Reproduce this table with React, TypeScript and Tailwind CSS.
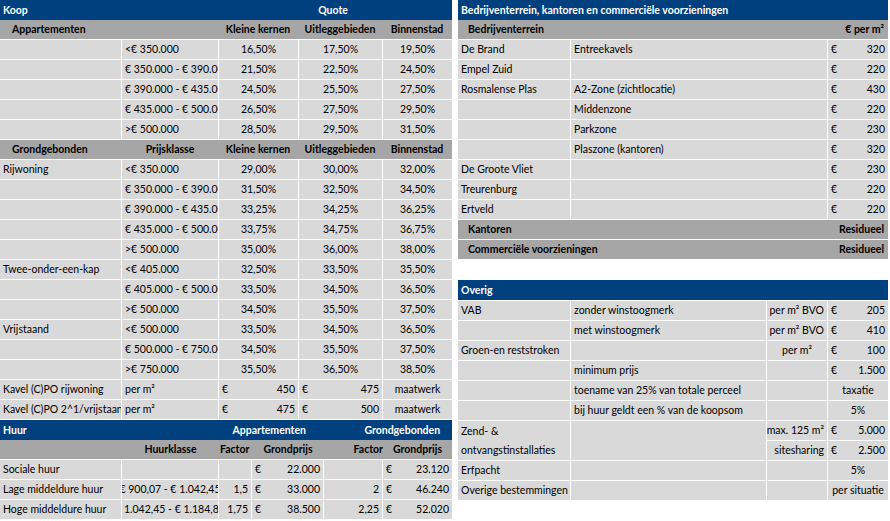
import React from 'react';
import clsx from 'clsx';

// Excel-like tables: grey cells split by 1px white lines
const cell = 'flex items-center overflow-hidden whitespace-nowrap bg-[#d9d9d9] px-[3px]';
const head = 'flex items-center overflow-hidden whitespace-nowrap bg-[#a6a6a6] font-bold';
const title = 'flex h-5 items-center bg-[#00407f] px-[3px] font-bold text-white';

function Money({ v }: { v: string }) {
  return (
    <div className={clsx(cell, 'justify-between')}>
      <span>€</span>
      <span>{v}</span>
    </div>
  );
}

const apartments = [
  ['<€ 350.000', '16,50%', '17,50%', '19,50%'],
  ['€ 350.000 - € 390.000', '21,50%', '22,50%', '24,50%'],
  ['€ 390.000 - € 435.000', '24,50%', '25,50%', '27,50%'],
  ['€ 435.000 - € 500.000', '26,50%', '27,50%', '29,50%'],
  ['>€ 500.000', '28,50%', '29,50%', '31,50%'],
];

const grond = [
  ['Rijwoning', '<€ 350.000', '29,00%', '30,00%', '32,00%'],
  ['', '€ 350.000 - € 390.000', '31,50%', '32,50%', '34,50%'],
  ['', '€ 390.000 - € 435.000', '33,25%', '34,25%', '36,25%'],
  ['', '€ 435.000 - € 500.000', '33,75%', '34,75%', '36,75%'],
  ['', '>€ 500.000', '35,00%', '36,00%', '38,00%'],
  ['Twee-onder-een-kap', '<€ 405.000', '32,50%', '33,50%', '35,50%'],
  ['', '€ 405.000 - € 500.000', '33,50%', '34,50%', '36,50%'],
  ['', '>€ 500.000', '34,50%', '35,50%', '37,50%'],
  ['Vrijstaand', '<€ 500.000', '33,50%', '34,50%', '36,50%'],
  ['', '€ 500.000 - € 750.000', '34,50%', '35,50%', '37,50%'],
  ['', '>€ 750.000', '35,50%', '36,50%', '38,50%'],
];

const kavels = [
  ['Kavel (C)PO rijwoning', '450', '475'],
  ['Kavel (C)PO 2^1/vrijstaand', '475', '500'],
];

const huur = [
  ['Sociale huur', '', '', '22.000', '', '23.120'],
  ['Lage middeldure huur', '€ 900,07 - € 1.042,45', '1,5', '33.000', '2', '46.240'],
  ['Hoge middeldure huur', '€ 1.042,45 - € 1.184,84', '1,75', '38.500', '2,25', '52.020'],
];

const bedrijven = [
  ['De Brand', 'Entreekavels', '320'],
  ['Empel Zuid', '', '220'],
  ['Rosmalense Plas', 'A2-Zone (zichtlocatie)', '430'],
  ['', 'Middenzone', '220'],
  ['', 'Parkzone', '230'],
  ['', 'Plaszone (kantoren)', '320'],
  ['De Groote Vliet', '', '230'],
  ['Treurenburg', '', '220'],
  ['Ertveld', '', '220'],
];

function LeftTables() {
  return (
    <div className="w-[452px]">
      <div className={title}>
        <span className="w-[215px]">Koop</span>
        <span className="w-[233px] text-center">Quote</span>
      </div>
      <div className="grid grid-cols-[121px_96px_79px_83px_69px] auto-rows-[19px] gap-px">
        <div className={clsx(head, 'col-span-5 grid grid-cols-[218px_80px_84px_70px]')}>
          <span className="pl-3">Appartementen</span>
          <span className="text-center">Kleine kernen</span>
          <span className="text-center">Uitleggebieden</span>
          <span className="text-center">Binnenstad</span>
        </div>
        {apartments.map((r) => (
          <React.Fragment key={r[0]}>
            <div className={cell} />
            <div className={cell}>{r[0]}</div>
            <div className={clsx(cell, 'justify-center')}>{r[1]}</div>
            <div className={clsx(cell, 'justify-center')}>{r[2]}</div>
            <div className={clsx(cell, 'justify-center')}>{r[3]}</div>
          </React.Fragment>
        ))}
        <div className={clsx(head, 'col-span-5 grid grid-cols-[122px_96px_80px_84px_70px]')}>
          <span className="pl-3">Grondgebonden</span>
          <span className="text-center">Prijsklasse</span>
          <span className="text-center">Kleine kernen</span>
          <span className="text-center">Uitleggebieden</span>
          <span className="text-center">Binnenstad</span>
        </div>
        {grond.map((r, i) => (
          <React.Fragment key={i}>
            <div className={cell}>{r[0]}</div>
            <div className={cell}>{r[1]}</div>
            <div className={clsx(cell, 'justify-center')}>{r[2]}</div>
            <div className={clsx(cell, 'justify-center')}>{r[3]}</div>
            <div className={clsx(cell, 'justify-center')}>{r[4]}</div>
          </React.Fragment>
        ))}
        {kavels.map((r) => (
          <React.Fragment key={r[0]}>
            <div className={cell}>{r[0]}</div>
            <div className={cell}>per m²</div>
            <Money v={r[1]} />
            <Money v={r[2]} />
            <div className={clsx(cell, 'justify-center')}>maatwerk</div>
          </React.Fragment>
        ))}
      </div>
      <div className={clsx(title, 'mt-px')}>
        <span className="w-[215px]">Huur</span>
        <span className="w-[105px] text-center">Appartementen</span>
        <span className="w-[128px] pl-[34px] text-center">Grondgebonden</span>
      </div>
      <div className="grid grid-cols-[121px_96px_32px_71px_58px_69px] auto-rows-[19px] gap-px">
        <div className={clsx(head, 'col-span-6 grid grid-cols-[122px_97px_33px_72px_59px_69px]')}>
          <span />
          <span className="text-center">Huurklasse</span>
          <span className="pl-px">Factor</span>
          <span className="text-center">Grondprijs</span>
          <span className="text-right">Factor</span>
          <span className="text-center">Grondprijs</span>
        </div>
        {huur.map((r) => (
          <React.Fragment key={r[0]}>
            <div className={cell}>{r[0]}</div>
            <div className={clsx(cell, 'justify-center')}>{r[1]}</div>
            <div className={clsx(cell, 'justify-end')}>{r[2]}</div>
            <Money v={r[3]} />
            <div className={clsx(cell, 'justify-end')}>{r[4]}</div>
            <Money v={r[5]} />
          </React.Fragment>
        ))}
      </div>
    </div>
  );
}

function RightTables() {
  return (
    <div className="w-[430px]">
      <div className={title}>Bedrijventerrein, kantoren en commerciële voorzieningen</div>
      <div className="grid grid-cols-[112px_256px_60px] auto-rows-[19px] gap-px">
        <div className={clsx(head, 'col-span-3 justify-between pl-[10px] pr-[4px]')}>
          <span>Bedrijventerrein</span>
          <span>€ per m²</span>
        </div>
        {bedrijven.map((r) => (
          <React.Fragment key={r[2] + r[0] + r[1]}>
            <div className={cell}>{r[0]}</div>
            <div className={cell}>{r[1]}</div>
            <Money v={r[2]} />
          </React.Fragment>
        ))}
        {['Kantoren', 'Commerciële voorzieningen'].map((t) => (
          <div key={t} className={clsx(head, 'col-span-3 justify-between pl-[10px] pr-[4px]')}>
            <span>{t}</span>
            <span>Residueel</span>
          </div>
        ))}
      </div>

      <div className={clsx(title, 'mt-[21px]')}>Overig</div>
      <div className="mt-px grid grid-cols-[112px_195px_60px_60px] auto-rows-[19px] gap-px">
        <div className={cell}>VAB</div>
        <div className={cell}>zonder winstoogmerk</div>
        <div className={clsx(cell, 'justify-end')}>per m² BVO</div>
        <Money v="205" />

        <div className={cell} />
        <div className={cell}>met winstoogmerk</div>
        <div className={clsx(cell, 'justify-end')}>per m² BVO</div>
        <Money v="410" />

        <div className={cell}>Groen-en reststroken</div>
        <div className={cell} />
        <div className={clsx(cell, 'justify-center')}>per m²</div>
        <Money v="100" />

        <div className={cell} />
        <div className={cell}>minimum prijs</div>
        <div className={cell} />
        <Money v="1.500" />

        <div className={cell} />
        <div className={cell}>toename van 25% van totale perceel</div>
        <div className={cell} />
        <div className={clsx(cell, 'justify-center')}>taxatie</div>

        <div className={cell} />
        <div className={cell}>bij huur geldt een % van de koopsom</div>
        <div className={cell} />
        <div className={clsx(cell, 'justify-center')}>5%</div>

        <div className={clsx(cell, 'row-span-2 flex-col items-start justify-center whitespace-normal leading-[19px]')}>
          <span>Zend- &amp;</span>
          <span>ontvangstinstallaties</span>
        </div>
        <div className={clsx(cell, 'row-span-2')} />
        <div className={clsx(cell, 'justify-end')}>max. 125 m²</div>
        <Money v="5.000" />
        <div className={clsx(cell, 'justify-end')}>sitesharing</div>
        <Money v="2.500" />

        <div className={cell}>Erfpacht</div>
        <div className={cell} />
        <div className={cell} />
        <div className={clsx(cell, 'justify-center')}>5%</div>

        <div className={cell}>Overige bestemmingen</div>
        <div className={cell} />
        <div className={cell} />
        <div className={clsx(cell, 'justify-center')}>per situatie</div>
      </div>
    </div>
  );
}

export default function App() {
  return (
    <div className="flex h-[521px] w-[890px] gap-[6px] overflow-hidden bg-white font-['Lato','Liberation_Sans',sans-serif] text-[10.5px] leading-none text-black">
      <LeftTables />
      <RightTables />
    </div>
  );
}
